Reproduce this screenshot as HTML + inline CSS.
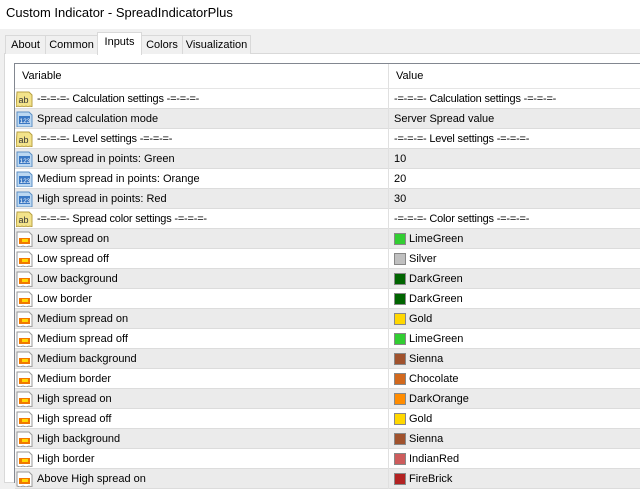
<!DOCTYPE html>
<html><head><style>
*{margin:0;padding:0;box-sizing:border-box}
body{width:640px;height:480px;overflow:hidden;background:#f0f0f0;font-family:"Liberation Sans",sans-serif;font-size:11px;color:#000;position:relative}
.title{position:absolute;left:0;top:0;width:640px;height:29px;background:#fff;font-size:13px;padding:5px 0 0 6px}
.tab{position:absolute;top:35px;height:19px;border:1px solid #d9d9d9;border-bottom:none;background:#f0f0f0;padding:3px 0 0 0;text-align:center}
.tab.sel{top:32px;height:23px;background:#fff;border-color:#d9d9d9;z-index:2}
.panel{position:absolute;left:4px;top:53px;width:640px;height:430px;background:#fff;border:1px solid #d9d9d9}
.list{position:absolute;left:14px;top:63px;width:630px;height:420px;border:1px solid #828790;background:#fff}
.hdr{position:absolute;left:0;top:0;width:630px;height:25px;border-bottom:1px solid #e5e5e5}
.hdr span{position:absolute;top:6px}
.row{position:absolute;left:0;width:630px;height:20px;border-bottom:1px solid #dcdcdc}
.row.g{background:#ebebeb}
.row .v{position:absolute;left:22px;top:4px;white-space:nowrap}
.row .val{position:absolute;left:379px;top:4px;white-space:nowrap}
.row .sw{position:absolute;left:379px;top:4px;width:12px;height:12px;border:1px solid #888}
.row .sv{position:absolute;left:394px;top:4px}
.ic{position:absolute;left:1px;top:2px;width:17px;height:16px}
.sm{letter-spacing:-.2px}
</style></head><body>
<div class="title">Custom Indicator - SpreadIndicatorPlus</div>
<div class="panel"></div>
<div class="tab" style="left:5px;width:41px">About</div>
<div class="tab" style="left:45px;width:53px">Common</div>
<div class="tab sel" style="left:97px;width:45px">Inputs</div>
<div class="tab" style="left:141px;width:42px">Colors</div>
<div class="tab" style="left:182px;width:69px">Visualization</div>
<div class="list">
<div class="hdr"><span style="left:7px">Variable</span><span style="left:381px">Value</span></div>
</div>
<div id="r" style="position:absolute;left:15px;top:89px;width:630px;height:400px;overflow:hidden">
<svg width="0" height="0" style="position:absolute"><defs>
<g id="ab"><path d="M1 1h12l3 3v12l-2-1-2 1-2-1-2 1-2-1-2 1-2-1-2 1z" fill="#f3e38a" stroke="#b8a044"/><text x="2.5" y="12" font-size="9" font-family="Liberation Sans" fill="#333">ab</text></g>
<g id="n"><path d="M1 1h12l3 3v12h-15z" fill="#bcd8f2" stroke="#5c8fc4"/><rect x="3" y="5" width="11" height="8" fill="#3a78c4"/><text x="3.5" y="12" font-size="6.5" font-family="Liberation Sans" fill="#fff">123</text></g>
<g id="c"><path d="M1 1h12l3 3v12l-3-1-3 1-3-1-3 1-3-1z" fill="#fff" stroke="#999"/><rect x="3" y="7" width="11" height="6" fill="#f07800"/><rect x="6" y="8" width="6" height="3" fill="#ffd800"/></g>
</defs></svg>
<div class="row" style="top:0"><svg class="ic"><use href="#ab"/></svg><span class="v sm">-=-=-=- Calculation settings -=-=-=-</span><span class="val sm">-=-=-=- Calculation settings -=-=-=-</span></div>
<div class="row g" style="top:20px"><svg class="ic"><use href="#n"/></svg><span class="v">Spread calculation mode</span><span class="val">Server Spread value</span></div>
<div class="row" style="top:40px"><svg class="ic"><use href="#ab"/></svg><span class="v sm">-=-=-=- Level settings -=-=-=-</span><span class="val sm">-=-=-=- Level settings -=-=-=-</span></div>
<div class="row g" style="top:60px"><svg class="ic"><use href="#n"/></svg><span class="v">Low spread in points: Green</span><span class="val">10</span></div>
<div class="row" style="top:80px"><svg class="ic"><use href="#n"/></svg><span class="v">Medium spread in points: Orange</span><span class="val">20</span></div>
<div class="row g" style="top:100px"><svg class="ic"><use href="#n"/></svg><span class="v">High spread in points: Red</span><span class="val">30</span></div>
<div class="row" style="top:120px"><svg class="ic"><use href="#ab"/></svg><span class="v sm">-=-=-=- Spread color settings -=-=-=-</span><span class="val sm">-=-=-=- Color settings -=-=-=-</span></div>
<div class="row g" style="top:140px"><svg class="ic"><use href="#c"/></svg><span class="v">Low spread on</span><span class="sw" style="background:#32cd32"></span><span class="sv">LimeGreen</span></div>
<div class="row" style="top:160px"><svg class="ic"><use href="#c"/></svg><span class="v">Low spread off</span><span class="sw" style="background:#c0c0c0"></span><span class="sv">Silver</span></div>
<div class="row g" style="top:180px"><svg class="ic"><use href="#c"/></svg><span class="v">Low background</span><span class="sw" style="background:#006400"></span><span class="sv">DarkGreen</span></div>
<div class="row" style="top:200px"><svg class="ic"><use href="#c"/></svg><span class="v">Low border</span><span class="sw" style="background:#006400"></span><span class="sv">DarkGreen</span></div>
<div class="row g" style="top:220px"><svg class="ic"><use href="#c"/></svg><span class="v">Medium spread on</span><span class="sw" style="background:#ffd700"></span><span class="sv">Gold</span></div>
<div class="row" style="top:240px"><svg class="ic"><use href="#c"/></svg><span class="v">Medium spread off</span><span class="sw" style="background:#32cd32"></span><span class="sv">LimeGreen</span></div>
<div class="row g" style="top:260px"><svg class="ic"><use href="#c"/></svg><span class="v">Medium background</span><span class="sw" style="background:#a0522d"></span><span class="sv">Sienna</span></div>
<div class="row" style="top:280px"><svg class="ic"><use href="#c"/></svg><span class="v">Medium border</span><span class="sw" style="background:#d2691e"></span><span class="sv">Chocolate</span></div>
<div class="row g" style="top:300px"><svg class="ic"><use href="#c"/></svg><span class="v">High spread on</span><span class="sw" style="background:#ff8c00"></span><span class="sv">DarkOrange</span></div>
<div class="row" style="top:320px"><svg class="ic"><use href="#c"/></svg><span class="v">High spread off</span><span class="sw" style="background:#ffd700"></span><span class="sv">Gold</span></div>
<div class="row g" style="top:340px"><svg class="ic"><use href="#c"/></svg><span class="v">High background</span><span class="sw" style="background:#a0522d"></span><span class="sv">Sienna</span></div>
<div class="row" style="top:360px"><svg class="ic"><use href="#c"/></svg><span class="v">High border</span><span class="sw" style="background:#cd5c5c"></span><span class="sv">IndianRed</span></div>
<div class="row g" style="top:380px"><svg class="ic"><use href="#c"/></svg><span class="v">Above High spread on</span><span class="sw" style="background:#b22222"></span><span class="sv">FireBrick</span></div>
<div style="position:absolute;left:373px;top:0;width:1px;height:400px;background:#e0e0e0"></div>
</div>
<div style="position:absolute;left:388px;top:64px;width:1px;height:25px;background:#e0e0e0"></div>
</body></html>
